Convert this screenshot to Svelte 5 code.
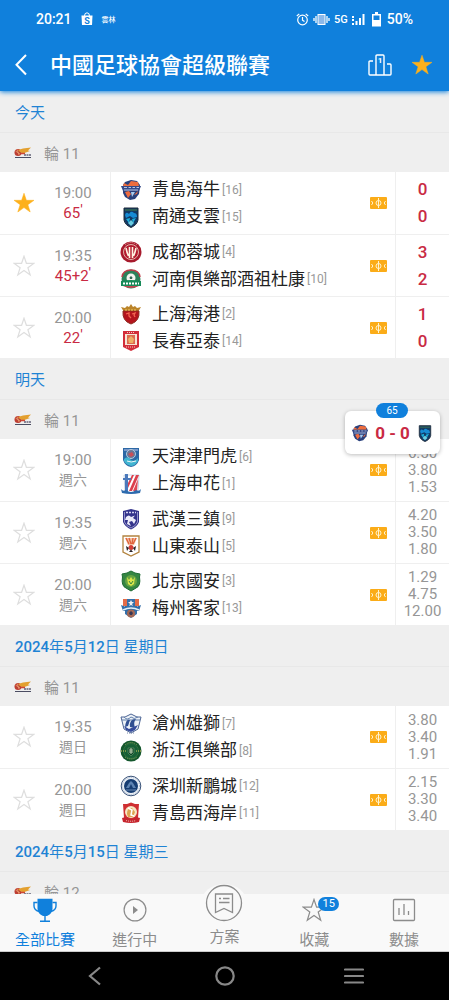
<!-- League schedule screen in Svelte. -->

<script>
	// Match minute and teams in the floating score card.
	const Pinned = {Minute: 65, Home: "hainiu", Away: "nantong", Score: "0 - 0"}

	// Days with matches.
	let Days = [
		{Date: "今天", Round: "輪 11", Matches: [
			{Time: "19:00", Minute: "65", Starred: true, Scores: [0, 0], Teams: [["青島海牛", 16, "hainiu"], ["南通支雲", 15, "nantong"]]},
			{Time: "19:35", Minute: "45+2", Starred: false, Scores: [3, 2], Teams: [["成都蓉城", 4, "chengdu"], ["河南俱樂部酒祖杜康", 10, "henan"]]},
			{Time: "20:00", Minute: "22", Starred: false, Scores: [1, 0], Teams: [["上海海港", 2, "port"], ["長春亞泰", 14, "changchun"]]}
		]},
		{Date: "明天", Round: "輪 11", Matches: [
			{Time: "19:00", Day: "週六", Starred: false, Odds: ["6.50", "3.80", "1.53"], Teams: [["天津津門虎", 6, "tianjin"], ["上海申花", 1, "shenhua"]]},
			{Time: "19:35", Day: "週六", Starred: false, Odds: ["4.20", "3.50", "1.80"], Teams: [["武漢三鎮", 9, "wuhan"], ["山東泰山", 5, "shandong"]]},
			{Time: "20:00", Day: "週六", Starred: false, Odds: ["1.29", "4.75", "12.00"], Teams: [["北京國安", 3, "beijing"], ["梅州客家", 13, "meizhou"]]}
		]},
		{Date: "2024年5月12日 星期日", Round: "輪 11", Matches: [
			{Time: "19:35", Day: "週日", Starred: false, Odds: ["3.80", "3.40", "1.91"], Teams: [["滄州雄獅", 7, "cangzhou"], ["浙江俱樂部", 8, "zhejiang"]]},
			{Time: "20:00", Day: "週日", Starred: false, Odds: ["2.15", "3.30", "3.40"], Teams: [["深圳新鵬城", 12, "shenzhen"], ["青島西海岸", 11, "westcoast"]]}
		]},
		{Date: "2024年5月15日 星期三", Round: "輪 12", Matches: []}
	]

	// Bottom tabs.
	const Tabs = [
		{Id: "all", Label: "全部比賽"},
		{Id: "live", Label: "進行中"},
		{Id: "tips", Label: "方案"},
		{Id: "saved", Label: "收藏", Count: 15},
		{Id: "stats", Label: "數據"}
	]

	let ActiveTab = "all"
	let LeagueStarred = true

	// Star or un-star a match.
	function ToggleStar(Match) {
		Match.Starred = !Match.Starred
		Days = [...Days]
	}

	// Split a date into digits and other characters, digits are drawn heavier.
	function DateParts(Text) {
		return Text.split(/(\d+)/).filter(Part => Part !== "")
	}
</script>

<style>
	:global(body) {
		background: #efefef;
	}

	.screen {
		position: relative;
		display: flex;
		flex-direction: column;
		height: 100vh;
		overflow: hidden;
		background: #efefef;
		font-family: Roboto, "Noto Sans CJK TC", sans-serif;
		font-size: 15px;
		color: #969696;
	}

	button {
		display: flex;
		align-items: center;
		justify-content: center;
		padding: 0;
		border: 0;
		background: none;
		color: inherit;
		font: inherit;
		cursor: pointer;
	}

	svg {
		display: block;
		flex: none;
	}

	h1, h2 {
		margin: 0;
	}

	/* Header. */
	header {
		position: relative;
		z-index: 1;
		flex: none;
		background: #1080dc;
		color: white;
		box-shadow: 0 1px 5px #1080dc;
	}

	.status {
		display: flex;
		align-items: center;
		gap: 7px;
		height: 38px;
		padding: 0 36px;
		font-size: 14px;
		font-weight: 500;
	}

	.status .carrier {
		font-size: 7px;
		margin-right: auto;
	}

	.phone {
		display: flex;
		align-items: center;
		gap: 3px;
	}

	.phone .net {
		font-size: 11px;
	}

	.titlebar {
		display: flex;
		align-items: center;
		height: 53px;
		padding: 0 16px 0 12px;
	}

	.titlebar h1 {
		flex: 1;
		margin-left: 18px;
		padding-top: 2px;
		font-size: 22px;
		font-weight: 500;
		line-height: 30px;
		white-space: nowrap;
	}

	.titlebar .podium {
		margin-right: 18px;
	}

	/* List of days. */
	.list {
		flex: 1;
		min-height: 0;
		overflow-y: auto;
		scrollbar-width: none;
	}

	.date {
		box-sizing: border-box;
		height: 42px;
		padding: 0 15px;
		border-bottom: 1px solid #e8e8e8;
		color: #1f83d4;
		font-size: 15px;
		font-weight: 400;
		line-height: 45px;
	}

	.date b {
		font-weight: 500;
	}

	.league {
		display: flex;
		align-items: center;
		gap: 12px;
		height: 39px;
		padding: 0 14px;
	}

	.match {
		display: flex;
		box-sizing: border-box;
		height: 62px;
		background: white;
	}

	.match + .match {
		border-top: 1px solid #efefef;
	}

	.star {
		width: 48px;
	}

	.when {
		display: flex;
		flex-direction: column;
		justify-content: center;
		width: 50px;
		margin-right: 12px;
		line-height: 20px;
		text-align: center;
	}

	.when .day {
		font-size: 14px;
	}

	.when .minute {
		color: #c92a43;
	}

	.when sup {
		font-size: 15px;
		line-height: 0;
		vertical-align: 3px;
	}

	.teams {
		display: flex;
		flex: 1;
		flex-direction: column;
		justify-content: center;
		min-width: 0;
		border-left: 1px solid #efefef;
		padding-left: 9px;
	}

	.team {
		display: flex;
		align-items: center;
		height: 27px;
		white-space: nowrap;
	}

	.team .name {
		margin: 0 2px 0 10px;
		color: #222;
		font-size: 17px;
		line-height: 29px;
	}

	.team .rank {
		font-size: 12px;
		color: #999;
	}

	.watch {
		width: 34px;
	}

	.result {
		display: flex;
		flex-direction: column;
		justify-content: center;
		width: 53px;
		border-left: 1px solid #efefef;
		line-height: 17px;
		text-align: center;
	}

	.result .score {
		color: #c92a43;
		font-size: 17px;
		font-weight: 500;
		line-height: 27px;
	}

	/* Floating score card. */
	.pinned {
		position: absolute;
		top: 411px;
		right: 9px;
		z-index: 2;
		gap: 6px;
		width: 95px;
		height: 43px;
		border-radius: 6px;
		background: white;
		box-shadow: 0 1px 4px #0004;
		color: #c92a43;
		font-size: 17px;
		font-weight: 700;
	}

	.pinned .minute {
		position: absolute;
		top: -8px;
		left: 31px;
		width: 32px;
		border-radius: 8px;
		background: #1080dc;
		color: white;
		font-size: 10px;
		font-weight: 400;
		line-height: 15px;
	}

	/* Bottom tabs. */
	.tabs {
		position: relative;
		z-index: 1;
		display: flex;
		flex: none;
		height: 57px;
		background: #f9f9f9;
		border-bottom: 1px solid #ccc;
	}

	.tabs button {
		flex: 1;
		flex-direction: column;
		justify-content: flex-end;
		color: #8c8c8c;
		line-height: 22px;
	}

	.tabs button.active {
		color: #1080dc;
	}

	.tabs .icon {
		position: relative;
		display: flex;
		align-items: center;
		justify-content: center;
		height: 32px;
		margin-bottom: 3px;
	}

	.tabs .icon.raised {
		width: 46px;
		height: 46px;
		border-radius: 50%;
		background: #f9f9f9;
	}

	.tabs .raised + span {
		padding: 1px 0 3px;
	}

	.tabs .count {
		position: absolute;
		top: 3px;
		left: 16px;
		width: 21px;
		border-radius: 8px;
		background: #1080dc;
		color: white;
		font-size: 11px;
		line-height: 14px;
	}

	/* System navigation. */
	.system {
		display: flex;
		flex: none;
		height: 48px;
		padding: 0 30px;
		background: black;
	}

	.system button {
		flex: 1;
	}
</style>

{#snippet star(On)}
	<svg width="22" height="22" viewBox="0 0 22 22">
		<path d="M11 1.2 13.4 8.3H21L14.9 12.7 17.2 20 11 15.6 4.8 20 7.1 12.7 1 8.3H8.6Z" fill={On ? "#fdb01b" : "none"} stroke={On ? "#fdb01b" : "#dedede"} stroke-width={On ? 0.5 : 1.2} />
	</svg>
{/snippet}

{#snippet crest(Id, Size)}
	<svg width={Size} height={Size} viewBox="0 0 22 22">
		{#if Id === "hainiu"}
			<path d="M3 6 5 3 11 1 17 2 20 6 19 15 15 20 10 21 5 18 3 14Z" fill="#29407c" />
			<path d="M4 4 8 6 11 2 18 3 19 7H3Z" fill="#ee6d3d" />
			<path d="M1 7H21L19 12H3Z" fill="#354a88" />
			<path d="M4 8.5H7M8.500 8.500H11M12.500 8.500H15M16.500 8.500H19M4 11H18" stroke="#b9c6e6" />
			<path d="M5 13 9 12 11 15 8 19ZM14 16 18 12 17 15Z" fill="#ec6b40" />
			<path d="M11 13 15 13 12 18Z" fill="#a9cbee" />
		{:else if Id === "nantong"}
			<path d="M4 2H18V14Q17 19 11 21.500Q5 19 4 14Z" fill="#123a66" stroke="#1d2b38" />
			<path d="M5 3H17V5H5Z" fill="#2c5d57" />
			<path d="M5 9Q6 5 9 8Q11 4 14 7Q17 7 17 11L13 12 10 10 6 12Z" fill="#168bd4" />
			<path d="M6 13 10 12 9 17ZM12 13 16 12 13 17Z" fill="#1bb0dd" />
			<path d="M8 17 11 14 14 17 11 20Z" fill="#69cce1" />
		{:else if Id === "chengdu"}
			<circle cx="11" cy="11" r="10.500" fill="#a71a2c" />
			<circle cx="11" cy="11" r="7.500" fill="#b3192d" stroke="#eeddcc" stroke-width="0.800" />
			<path d="M6 7Q7 12 8.500 15M9.500 6V17M12.500 6V17M16 7Q15 12 13.500 15" stroke="#fff3e2" stroke-width="1.600" fill="none" />
			<path d="M5 4Q11 -1 17 4" stroke="#e5a7a5" stroke-dasharray="1 1" fill="none" />
		{:else if Id === "henan"}
			<circle cx="11" cy="11" r="9.500" fill="#2c815a" />
			<path d="M2 9Q3 2 11 2Q19 2 20 9" stroke="#bd3b47" stroke-width="1.500" fill="none" />
			<circle cx="11" cy="10" r="4.500" fill="#f3f5ef" />
			<path d="M11 8 12.500 9.500 12 11H10L9.500 9.500Z" fill="#356658" />
			<path d="M1 13Q11 11 21 13V18H1Z" fill="#168a58" />
			<path d="M3 15.500H19" stroke="#fff" stroke-width="2" stroke-dasharray="2 1" />
			<path d="M3 18Q11 22 19 18Z" fill="#c34652" />
		{:else if Id === "port"}
			<path d="M1 4 5 5 7 3 9 4 11 1 13 4 15 3 17 5 21 4 18 9H4Z" fill="#bb8429" />
			<path d="M3 8H19Q20 18 11 21Q2 18 3 8Z" fill="#b4141d" stroke="#8d2d21" />
			<path d="M6 11 9 10 9 13 11 15M12 11 15 10 14 12 15 14" stroke="#f26752" stroke-width="1.300" fill="none" />
			<path d="M5 7H17" stroke="#f2cc62" stroke-dasharray="2 1" />
		{:else if Id === "changchun"}
			<path d="M3 1H19V17L11 21 3 17Z" fill="#d22d39" />
			<path d="M5 4H17V15H5Z" fill="#f5e5d5" />
			<path d="M7 5H15V14H7Z" fill="#dd6a4e" />
			<path d="M8 9 11 6 14 9 13 13H9Z" fill="#eeb066" />
			<path d="M6 17H16M7 2.500H15" stroke="#f7c7bf" stroke-dasharray="1 1" />
		{:else if Id === "tianjin"}
			<path d="M3 2H19V14Q17 20 11 21Q5 20 3 14Z" fill="#2c68a5" />
			<path d="M4 4H18" stroke="#7796c9" stroke-width="2" />
			<circle cx="11" cy="8" r="4.500" fill="#6a7695" stroke="#b1cbdf" />
			<path d="M8 8 12 6 14 9 11 11Z" fill="#c94f58" />
			<path d="M4 13Q8 9 11 14Q15 16 18 12V15Q15 20 11 20Q6 19 4 15Z" fill="#41b5d1" />
			<path d="M7 15Q11 17 16 15" stroke="#eff7fa" fill="none" />
		{:else if Id === "shenhua"}
			<path d="M4 2H19L18 18Q11 22 5 18Z" fill="#fff" stroke="#8ea9cb" stroke-width="0.500" />
			<path d="M16 2H19L12 18H9ZM12 2H14L8 15 7 12Z" fill="#db3f4d" />
			<path d="M18 6 17 18H13Z" fill="#e04957" />
			<path d="M5 1H8V5H11V7H8V18H5V7H3V5H5Z" fill="#4b79bb" />
			<path d="M1 16Q3 19 6 17Q11 21 16 17Q19 19 21 16L20 20Q11 22 2 20Z" fill="#2e6bae" />
		{:else if Id === "wuhan"}
			<path d="M3 3 11 1 19 3V14Q17 19 11 21.500Q5 19 3 14Z" fill="#34348c" />
			<path d="M4.500 4V14Q6 18 11 20Q16 18 17.500 14V4" stroke="#b9b9e3" stroke-width="0.700" fill="none" />
			<path d="M6 4.500H16" stroke="#d4d4f1" stroke-width="1.500" stroke-dasharray="2 1" />
			<path d="M6 9Q9 6 11 9L15 7.500 13 10 16 12 14 16 12 13 9 14 11 18 7 16 8 12 5 12Z" fill="#ececfa" />
		{:else if Id === "shandong"}
			<path d="M3 1H19V17L11 21 3 17Z" fill="#fff" stroke="#b38440" stroke-width="1.300" />
			<path d="M5 3H17L14 10H8Z" fill="#f3c0a0" />
			<path d="M6 3 9 9M9 3 11 9M13 3 12 9M16 3 13 9" stroke="#e0603a" stroke-width="1.300" />
			<circle cx="11" cy="12.500" r="2.500" fill="#d43d35" />
			<path d="M6 11 9 13 7 16ZM16 11 13 13 15 16ZM9 17 11 14.500 13 17Z" fill="#292326" />
		{:else if Id === "beijing"}
			<path d="M2 4 7 3 11 1 15 3 20 4 19.500 7Q21 16 16 18L11 21 6 18Q1 16 2.500 7Z" fill="#358642" stroke="#1f6c34" />
			<circle cx="11" cy="11" r="6" fill="#65a442" />
			<path d="M7 7 9 10 11 7 13 10 15 7 14 14 11 16 8 14Z" fill="#dce64b" />
			<path d="M9 11 11 14 13 11" stroke="#358642" fill="none" />
		{:else if Id === "meizhou"}
			<path d="M5 2H17V17L11 21 5 17Z" fill="#3470aa" />
			<path d="M3 2H7V9H3ZM15 2H19V9H15Z" fill="#e46b47" />
			<path d="M11 3 12 5H14L12 7 13 9 11 8 9 9 10 7 8 5H10Z" fill="#f2eff2" />
			<path d="M1 8 6 10H16L21 8 19 14H3Z" fill="#306ba7" />
			<path d="M3 13Q11 9 19 13" stroke="#e4eff5" fill="none" stroke-width="1.500" />
			<circle cx="11" cy="16.500" r="4" fill="#a26754" />
			<path d="M9 16 11 14 13 16 12 18H10Z" fill="#373653" />
		{:else if Id === "cangzhou"}
			<path d="M1 4H5L11 1 17 4H21L18 16 11 20 4 16Z" fill="#edf2f8" stroke="#4c6595" />
			<path d="M2 7H20M4 4Q7 8 11 4Q14 7 18 4" stroke="#6280ab" fill="none" />
			<path d="M5 14Q6 5 10 7L8 13ZM10 14Q9 6 16 6 13 9 15 15Z" fill="#304f91" />
			<path d="M4 13 9 16 18 12 15 17 11 19 6 17Z" fill="#354b9b" />
			<path d="M7 20H15" stroke="#7384a8" stroke-dasharray="1 1" />
		{:else if Id === "zhejiang"}
			<circle cx="11" cy="11" r="10.500" fill="#14572d" />
			<circle cx="11" cy="11" r="7.500" fill="#176036" stroke="#3d7d48" stroke-width="0.600" />
			<path d="M8 8H14V13L11 16 8 13Z" fill="#0d4727" stroke="#6c9a70" stroke-width="0.600" />
			<path d="M9 10H13M11 8V14M9 12H13" stroke="#e9eed3" stroke-width="0.800" />
			<path d="M1 11H6M16 11H21" stroke="#dfcb63" stroke-dasharray="1 1" />
			<path d="M5 5Q11 0 17 5M5 17Q11 21 17 17" stroke="#8aa55e" fill="none" stroke-dasharray="1 1" />
		{:else if Id === "shenzhen"}
			<circle cx="11" cy="11" r="9.800" fill="#edf2f8" stroke="#3a5379" />
			<circle cx="11" cy="11" r="8.500" fill="none" stroke="#a5b4ca" stroke-dasharray="1 1" />
			<circle cx="11" cy="11" r="7" fill="#163d72" />
			<path d="M6 13 9 8 11 6 13 8 16 13H13L11 9 9 13Z" fill="#5d83b2" />
			<path d="M6 15H16" stroke="#7f9dc2" stroke-width="0.800" />
		{:else if Id === "westcoast"}
			<path d="M3 2 7 2 11 0.500 15 2 19 2 18 16 11 20 4 16Z" fill="#cf2f32" />
			<circle cx="11" cy="10" r="6" fill="#f7e7c4" />
			<path d="M7 12Q7 5 12 6L15 10 13 15H8Z" fill="#dda450" />
			<path d="M8 6 12 8 11 13 14 14" stroke="#fff" stroke-width="1.500" fill="none" />
			<path d="M2 16 6 15Q11 19 16 15L20 16 19 20Q11 22 3 20Z" fill="#c6252e" />
			<path d="M6 18.500Q11 20 16 18.500" stroke="#f3d2c4" fill="none" stroke-dasharray="1 1" />
		{/if}
	</svg>
{/snippet}

<div class="screen">
	<header>
		<!-- Phone status. -->
		<div class="status">
			<span>20:21</span>
			<svg width="16" height="14" viewBox="0 0 16 14">
				<path d="M5.500 4Q5.500 0.800 8 0.800T10.500 4" fill="none" stroke="#fff" />
				<path d="M2.500 3.500H13.500L13 13H3Z" fill="#fff" />
				<text x="8" y="11.500" text-anchor="middle" font-size="9" font-weight="700" fill="#1080dc">S</text>
			</svg>
			<span class="carrier">雲林</span>

			<div class="phone">
				<svg width="13" height="13" viewBox="0 0 13 13" fill="none" stroke="#fff" stroke-width="1.200">
					<circle cx="6.500" cy="7" r="4.800" />
					<path d="M6.500 4V7.200L8.500 8.600M0.800 3 3.300 0.900M12.200 3 9.700 0.900" />
				</svg>
				<svg width="19" height="13" viewBox="0 0 19 13" fill="none" stroke="#fff">
					<rect x="6" y="1.500" width="7" height="10" fill="#8cb9ea" />
					<path d="M4 3V10M15 3V10M2 5V8M17 5V8" stroke-width="1.300" />
				</svg>
				<span class="net">5G</span>
				<svg width="14" height="13" viewBox="0 0 14 13" fill="#fff">
					<path d="M1 3H3V5H1ZM1 6H3V8H1ZM1 10H3V12H1ZM4.500 8H6.500V12H4.500ZM8 5H10V12H8ZM11.500 1H13.500V12H11.500Z" />
				</svg>
				<svg width="16" height="15" viewBox="0 0 16 15">
					<path d="M7 0H10V2H13V14.500H4V2H7Z" fill="#fff" />
					<path d="M5.500 3.500H11.500V8H5.500Z" fill="#1080dc" />
				</svg>
				<span>50%</span>
			</div>
		</div>

		<!-- Title and actions. -->
		<div class="titlebar">
			<button aria-label="返回">
				<svg width="20" height="22" viewBox="0 0 20 22" fill="none" stroke="#fff" stroke-width="2">
					<path d="M14 1 4.500 10.700 14 20.500" />
				</svg>
			</button>
			<h1>中國足球協會超級聯賽</h1>
			<button class="podium" aria-label="積分榜">
				<svg width="26" height="24" viewBox="0 0 26 24" fill="none" stroke="#fff" stroke-width="1.400">
					<path d="M9 22V3Q9 2 10 2H16Q17 2 17 3V22M6 8H3Q2 8 2 9V21Q2 22 3 22H23Q24 22 24 21V12Q24 11 23 11H20" />
					<text x="13" y="10" text-anchor="middle" font-size="8" font-weight="700" fill="#fff" stroke="none">1</text>
				</svg>
			</button>
			<button aria-label="收藏聯賽" aria-pressed={LeagueStarred} on:click={() => LeagueStarred = !LeagueStarred}>
				{@render star(LeagueStarred)}
			</button>
		</div>
	</header>

	<!-- Matches by day. -->
	<main class="list">
		{#each Days as Day}
			<section>
				<h2 class="date">{#each DateParts(Day.Date) as Part}{#if Part > 0}<b>{Part}</b>{:else}{Part}{/if}{/each}</h2>
				<div class="league">
					<svg width="18" height="12" viewBox="0 0 18 12">
						<circle cx="4" cy="5.500" r="3.500" fill="#bd3e33" />
						<path d="M1.500 4 6 7M3 2.500 5 8" stroke="#efad78" stroke-width="0.700" />
						<path d="M4 3 9 1.500 17 0.500 14 3.500 16 4 9 6.500 6 5Z" fill="#e3a02f" />
						<path d="M7 6.500H11" stroke="#cf4735" stroke-width="1.500" />
						<path d="M10 8H17" stroke="#65647a" stroke-width="1.500" stroke-dasharray="2 0.500" />
						<path d="M1 10.500H17" stroke="#4b4d62" stroke-width="1" />
					</svg>
					<span>{Day.Round}</span>
				</div>

				{#each Day.Matches as Match}
					<div class="match">
						<button class="star" aria-label="收藏" aria-pressed={Match.Starred} on:click={() => ToggleStar(Match)}>
							{@render star(Match.Starred)}
						</button>

						<div class="when">
							<span>{Match.Time}</span>
							{#if Match.Minute}
								<span class="minute">{Match.Minute}<sup>'</sup></span>
							{:else}
								<span class="day">{Match.Day}</span>
							{/if}
						</div>

						<div class="teams">
							{#each Match.Teams as [Name, Rank, Crest]}
								<div class="team">
									{@render crest(Crest, 22)}
									<span class="name">{Name}</span>
									<span class="rank">[{Rank}]</span>
								</div>
							{/each}
						</div>

						<button class="watch" aria-label="陣容">
							<svg width="17" height="12" viewBox="0 0 17 12">
								<rect width="17" height="12" rx="1" fill="#fbac18" />
								<g fill="none" stroke="#fff3cf">
									<circle cx="8.500" cy="6" r="2.500" />
									<path d="M8.500 1V11" />
									<path d="M1.500 4 2.800 6 1.500 8M15.500 4 14.200 6 15.500 8" />
								</g>
							</svg>
						</button>

						<div class="result">
							{#if Match.Scores}
								{#each Match.Scores as Score}
									<span class="score">{Score}</span>
								{/each}
							{:else}
								{#each Match.Odds as Odd}
									<span>{Odd}</span>
								{/each}
							{/if}
						</div>
					</div>
				{/each}
			</section>
		{/each}
	</main>

	<!-- Floating score card. -->
	<button class="pinned">
		<span class="minute">{Pinned.Minute}</span>
		{@render crest(Pinned.Home, 18)}
		<span>{Pinned.Score}</span>
		{@render crest(Pinned.Away, 18)}
	</button>

	<!-- Bottom tabs. -->
	<nav class="tabs">
		{#each Tabs as Tab}
			<button class:active={ActiveTab === Tab.Id} on:click={() => ActiveTab = Tab.Id}>
				<span class="icon" class:raised={Tab.Id === "tips"}>
					{#if Tab.Id === "all"}
						<svg width="24" height="24" viewBox="0 0 24 24" fill="none" stroke="currentColor" stroke-width="1.400">
							<path d="M4.500 0.700H19.500V11Q19 16 14 18H10Q5 16 4.500 11Z" fill="currentColor" stroke="none" />
							<path d="M4.500 4.500H1V8Q1 12 6 13.500M19.500 4.500H23V8Q23 12 18 13.500M12 17V23M7 23.200H17" />
						</svg>
					{:else if Tab.Id === "live"}
						<svg width="24" height="24" viewBox="0 0 24 24">
							<circle cx="12" cy="12" r="10.900" fill="none" stroke="currentColor" stroke-width="1.200" />
							<path d="M10 8 15 12 10 16Z" fill="currentColor" />
						</svg>
					{:else if Tab.Id === "tips"}
						<svg width="38" height="38" viewBox="0 0 38 38" fill="none" stroke="currentColor" stroke-width="1.300">
							<circle cx="19" cy="19" r="17.500" />
							<path d="M10.500 10H27.500V28.500L19 24.500 10.500 28.500ZM14 14.500H16M18 14.500H24.500M14 18.500H24.500" />
						</svg>
					{:else if Tab.Id === "saved"}
						<svg width="24" height="24" viewBox="0 0 24 24" fill="none" stroke="currentColor" stroke-width="1.200">
							<path d="M12 1.500 14.600 9.200H22.800L16.200 14 18.700 22.300 12 17.400 5.300 22.300 7.800 14 1.200 9.200H9.400Z" />
						</svg>
					{:else}
						<svg width="24" height="24" viewBox="0 0 24 24" fill="none" stroke="currentColor" stroke-width="1.300">
							<rect x="1.500" y="1.500" width="21" height="21" rx="1" />
							<path d="M7 10V17M12 6V17M16.500 13V17" />
						</svg>
					{/if}
					{#if Tab.Count}
						<span class="count">{Tab.Count}</span>
					{/if}
				</span>
				<span>{Tab.Label}</span>
			</button>
		{/each}
	</nav>

	<!-- System navigation. -->
	<div class="system">
		<button aria-label="上一頁">
			<svg width="14" height="20" viewBox="0 0 14 20" fill="none" stroke="#888" stroke-width="2.200">
				<path d="M12 1.500 2 10 12 18.500" />
			</svg>
		</button>
		<button aria-label="主畫面">
			<svg width="20" height="20" viewBox="0 0 20 20">
				<circle cx="10" cy="10" r="8.700" fill="none" stroke="#888" stroke-width="2.200" />
			</svg>
		</button>
		<button aria-label="最近使用">
			<svg width="20" height="18" viewBox="0 0 20 18">
				<path d="M1 2.500H19M1 9H19M1 15.500H19" stroke="#888" stroke-width="2.200" stroke-linecap="round" />
			</svg>
		</button>
	</div>
</div>
